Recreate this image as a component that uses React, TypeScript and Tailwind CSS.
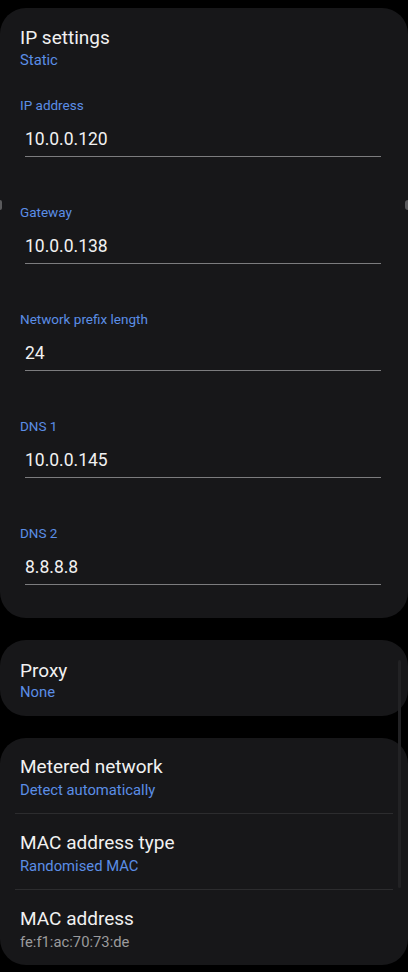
const fontStack = { fontFamily: 'Roboto, "Noto Sans", sans-serif' };

const fields = [
  { label: 'IP address', value: '10.0.0.120' },
  { label: 'Gateway', value: '10.0.0.138' },
  { label: 'Network prefix length', value: '24' },
  { label: 'DNS 1', value: '10.0.0.145' },
  { label: 'DNS 2', value: '8.8.8.8' },
];

function Field({ label, value }: { label: string; value: string }) {
  return (
    <div className="flex flex-col">
      <div className="text-[13.5px] leading-[18px] text-[#5b8ee6]">{label}</div>
      <div className="mt-[13px] ml-[5px] mr-[7px]">
        <div className="text-[17.5px] leading-[24px] text-[#f1f1f1]">{value}</div>
        <div className="mt-[5px] h-px bg-[#7c7c7e]" />
      </div>
    </div>
  );
}

function Row({
  title,
  sub,
  subGrey,
}: {
  title: string;
  sub: string;
  subGrey?: boolean;
}) {
  return (
    <div className="px-5 pt-[18px] pb-[13px]">
      <div className="text-[19px] leading-[22px] text-[#f1f1f1]">{title}</div>
      <div
        className={
          subGrey
            ? 'mt-[2px] text-[14.8px] leading-[20px] text-[#9b9b9d]'
            : 'mt-[2px] text-[14.8px] leading-[20px] text-[#5b8ee6]'
        }
      >
        {sub}
      </div>
    </div>
  );
}

export default function App() {
  return (
    <div className="relative h-[972px] w-[408px] overflow-hidden bg-black" style={fontStack}>
      {/* IP settings */}
      <div className="mt-[8px] rounded-[26px] bg-[#171719] px-5 pt-[19px] pb-[33px]">
        <div className="text-[19px] leading-[22px] text-[#f1f1f1]">IP settings</div>
        <div className="mt-[1px] text-[14.8px] leading-[20px] text-[#5b8ee6]">Static</div>
        <div className="mt-[26px] flex flex-col gap-[46px]">
          {fields.map(f => (
            <Field key={f.label} label={f.label} value={f.value} />
          ))}
        </div>
      </div>

      {/* Proxy */}
      <div className="mt-[22px] rounded-[26px] bg-[#171719]">
        <div className="px-5 pt-[20px] pb-[14px]">
          <div className="text-[19px] leading-[22px] text-[#f1f1f1]">Proxy</div>
          <div className="text-[14.8px] leading-[20px] text-[#5b8ee6]">None</div>
        </div>
      </div>

      {/* Metered / MAC */}
      <div className="mt-[22px] rounded-[26px] bg-[#171719]">
        <Row title="Metered network" sub="Detect automatically" />
        <div className="mx-[15px] h-px bg-[#2c2c2e]" />
        <Row title="MAC address type" sub="Randomised MAC" />
        <div className="mx-[15px] h-px bg-[#2c2c2e]" />
        <Row title="MAC address" sub="fe:f1:ac:70:73:de" subGrey />
      </div>

      {/* scroll indicator */}
      <div className="absolute left-[398px] top-[660px] h-[228px] w-[3px] rounded-full bg-[#222224]" />
      {/* edge marks */}
      <div className="absolute left-0 top-[200px] h-[10px] w-[2px] rounded-r-full bg-[#5a5a5c]" />
      <div className="absolute right-0 top-[200px] h-[10px] w-[3px] rounded-l-full bg-[#5a5a5c]" />
    </div>
  );
}
